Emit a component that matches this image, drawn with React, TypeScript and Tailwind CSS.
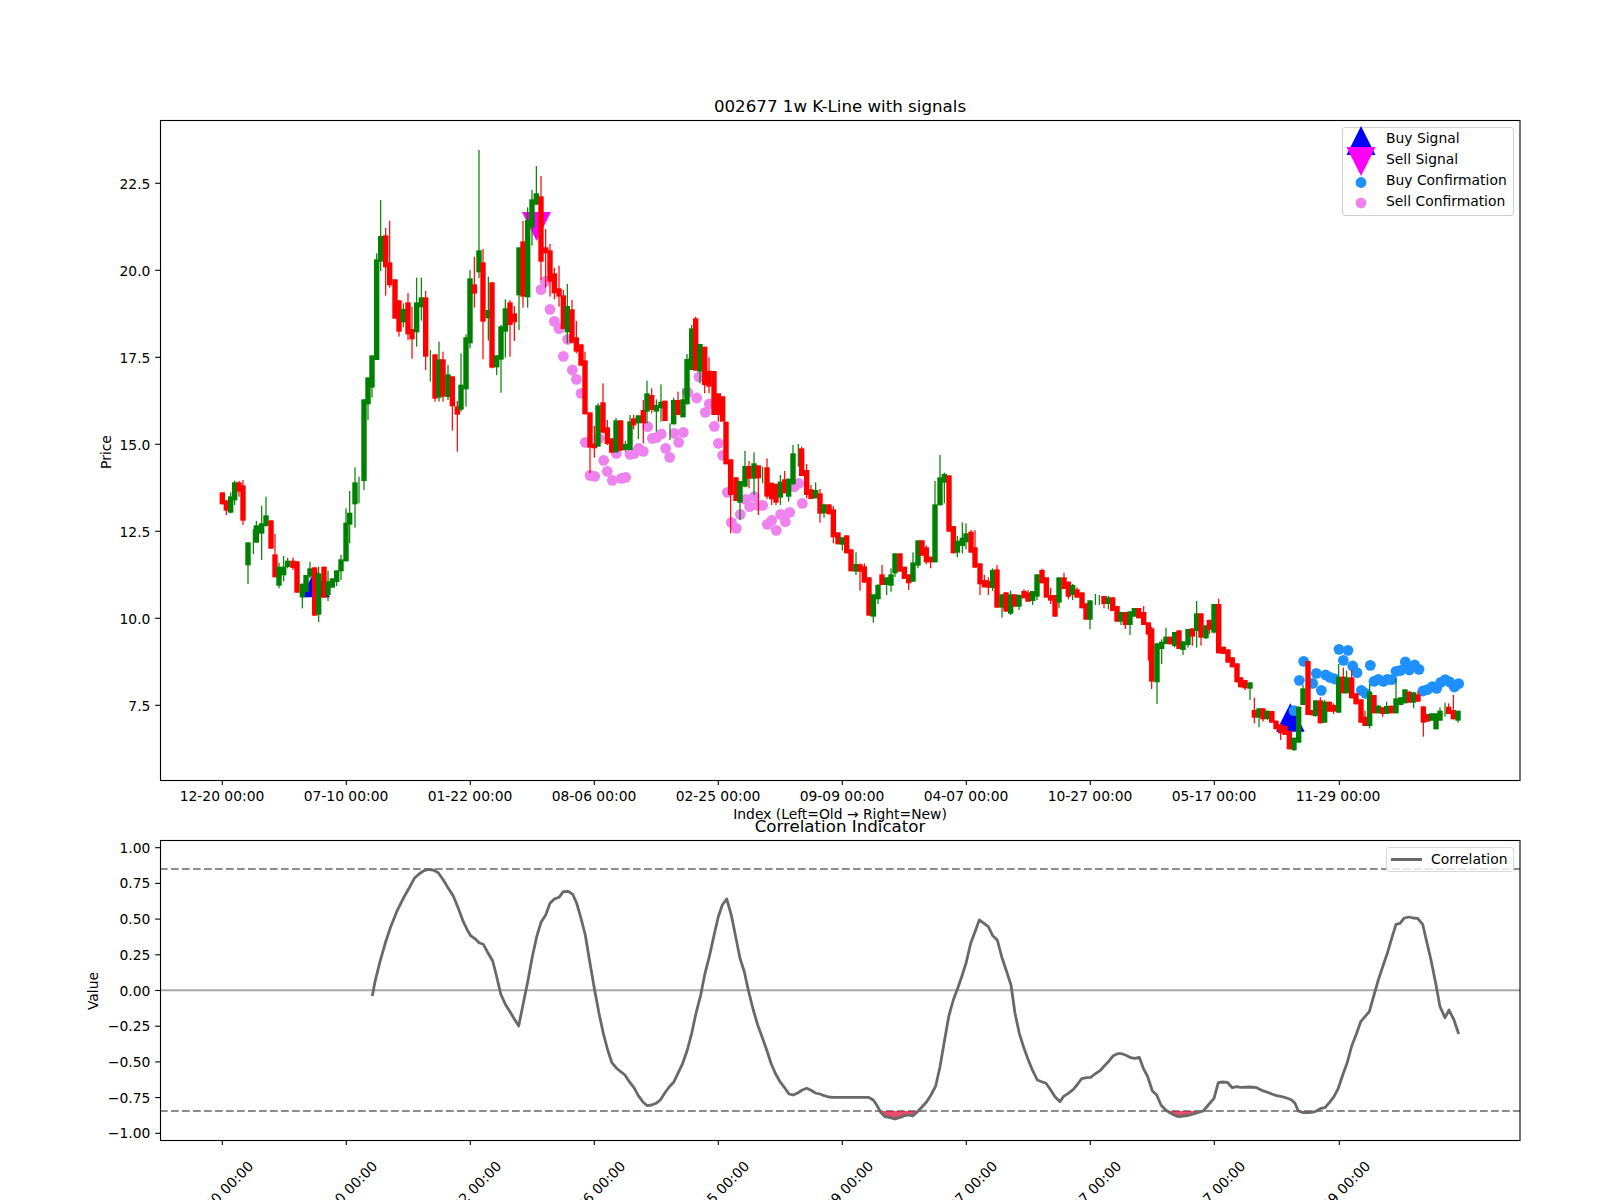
const G = "#008000";
const R = "#ff0000";
type C = number[];

// [x, red?, bodyTop, bodyBottom, wickTop?, wickBottom?] read per crop, converted below
const z4: C[] = [
  [247,1,157,193],[259,1,181,212,181,225],[272,0,169,218,157,220],[284,0,127,181,122,195],[297,1,127,155,123,170],[309,1,136,242,120,255],
  [324,0,307,376,307,432],[340,0,0,0,268,342],[349,0,256,308,243,308],[365,0,250,281,197,360],[378,0,226,258,170,260],[393,1,241,326],[405,1,343,412,282,412],
  [417,0,380,437,368,445],[431,0,380,406,348,424],[443,0,362,381,353,385],[459,1,362,384,353,390],[471,1,364,458],[487,0,431,472,431,505],[498,0,405,456],
  [510,0,385,410,365,415],[524,1,382,527],[536,0,400,524,380,546],[552,1,380,473],[564,0,424,465,392,483],[577,0,415,443],[590,0,391,426,391,438],
  [603,0,358,394,345,420],[618,0,248,364,205,364],[629,0,218,254,153,310],[645,0,127,193,82,263],[657,0,0,0,110,190],
];
const z1: C[] = [
  [672,0,928,1173,928,1200],[684,0,862,943,895,990],[696,0,796,893,813,923],[710,0,508,810,490,810],[722,0,438,515,330,543],[737,1,436,532,414,617],
  [749,1,517,586,392,593],[765,1,568,686],[777,1,631,725,631,740],[790,0,657,697,640,712],[804,1,637,733,609,750],[816,1,717,748,650,806],[830,0,637,727,563,770],
  [844,0,622,652,563,692],[857,1,622,800,603,840],[871,0,0,0,780,875],[885,1,793,926,793,935],[897,0,808,923,755,935],[909,1,808,920,785,935],[924,0,853,921,825,930],
  [937,1,859,949,859,1022],[952,1,949,974,933,1085],[963,0,884,959,790,965],[978,0,742,898,733,950],[990,0,565,760,540,775],[1003,1,583,611,500,653],[1017,0,481,547,180,565],
  [1029,1,517,695,477,808],[1045,0,660,685,560,752],[1056,1,577,833,577,835],[1070,0,796,832,796,855],[1083,0,709,809,705,908],[1096,0,655,725,628,803],[1110,1,637,705,630,800],
  [1123,1,670,697,648,753],[1137,0,472,616,472,720],[1149,1,454,620,393,653],[1163,0,390,622,352,653],[1176,0,328,412,300,467],[1189,0,310,344,228,344],[1203,1,319,515,258,570],
  [1217,1,472,490,417,593],[1230,1,481,575,462,620],[1243,1,550,610,533,628],[1257,1,595,620,527,650],[1270,1,616,717,600,718],[1282,0,648,727,582,760],[1296,1,658,758,630,760],
  [1309,1,742,785,693,790],[1323,1,763,827],[1335,1,811,973,785,973],[1350,1,967,1073,967,1150],[1363,1,1060,1075,1008,1103],[1374,0,946,1070,940,1070],[1389,1,937,1028,880,1030],
  [1402,1,1012,1062,990,1065],[1415,1,1045,1088],[1428,0,991,1087,984,1087],[1442,1,991,1082],[1456,0,1062,1080,1052,1085],[1470,0,994,1080,975,1080],[1481,1,985,1006,975,1018],[1495,0,976,1000,976,1047],
];
const z2: C[] = [
  [430,1,870,910,840,970],[441,0,820,875,782,910],[455,1,825,870,805,880],[469,0,855,875,838,935],[483,0,845,865,793,905],[495,1,842,903],[510,0,0,0,910,960],
  [521,0,840,913,833,913],[534,1,840,885,815,885],[549,0,838,892,805,892],[561,0,717,853,702,853],[575,0,625,750,615,750],[587,1,595,752,590,752],[600,0,672,755,672,790],
  [614,1,680,795,680,820],[627,1,752,800,712,820],[642,1,753,885],[655,1,820,885,820,905],[668,1,829,905],
];
const z3: C[] = [
  [678,1,65,193],[692,1,178,285,178,400],[708,1,232,303],[720,0,243,308,243,360],[735,0,198,260,153,262],[747,1,198,236,183,265],[762,0,190,236,157,285],[775,1,196,235,196,345],
  [788,0,0,0,200,250],[801,1,202,290,175,297],[815,1,248,298,248,315],[828,1,252,308,250,315],[841,0,245,293,225,315],[854,1,238,280,213,280],[866,0,236,290,236,305],[879,0,160,253,135,253],
  [895,0,0,0,132,200],[905,1,145,228,140,228],[920,1,210,285,192,295],[933,1,268,297,255,297],[947,0,270,295,247,295],[960,1,280,341,267,368],[972,0,313,340,313,353],[987,1,313,343],
  [1000,1,328,412,318,430],[1014,1,397,433],[1027,0,412,434,412,452],[1040,1,406,460],[1053,1,448,514],[1068,0,492,515,457,525],[1080,1,493,515,490,572],[1093,1,499,548,490,548],
  [1107,1,532,647],[1120,0,583,650,583,668],[1134,0,555,598,552,612],[1146,1,523,555,495,555],[1160,0,532,555,532,585],[1173,0,523,557,505,575],
];
const z5: C[] = [
  [45,0,340,400,340,411],[60,1,340,395],[73,1,380,417],[86,1,403,430,403,450],[99,0,367,425,337,425],[114,0,301,377,301,385],[126,1,301,347],[139,1,322,367,316,373],[152,1,350,367,350,385],
  [165,0,193,367,123,367],[180,0,112,196,45,196],[193,0,102,128,98,190],[207,1,106,275],[220,1,258,340],[232,0,302,338,288,352],[247,0,293,318,247,340],[258,0,280,307,250,328],[273,1,275,338,270,338],
  [285,1,322,383,270,383],[300,1,370,433,370,465],[313,1,420,442,405,442],[325,1,422,443,412,465],[338,0,390,444,385,453],[351,1,388,503,375,503],[366,0,463,503,463,533],[378,1,457,515],
  [392,0,463,521,452,525],[404,1,463,500],[417,0,465,500,463,510],[432,1,453,475,448,475],[444,1,457,485,450,485],[458,0,453,483,453,495],[471,0,403,470,403,480],[486,1,390,430,386,430],
  [499,1,412,473],[512,1,465,482,443,492],[525,1,465,530],[537,0,412,488,412,505],[552,1,412,447,398,447],[565,1,425,470,425,478],[578,0,435,465,432,480],[591,1,448,473,442,473],
  [606,1,457,505],[618,1,490,539],[630,0,481,539,481,568],[646,0,0,0,462,495],[658,0,0,0,465,495],[672,1,468,492,468,505],[685,0,472,492,468,508],[698,1,472,513],[711,1,498,545],
  [723,0,516,545,516,555],[736,1,516,555,516,567],[750,0,514,555,514,585],[763,0,504,530],[776,1,504,535],[791,1,516,555,498,555],[805,1,547,584,547,662],[815,1,565,725,560,747],
  [831,0,610,727,610,792],[845,0,605,627,598,672],[858,0,590,612,563,612],[870,1,590,613],[884,0,576,618,576,622],[897,1,571,627],[909,0,604,630,604,645],[924,0,567,615,567,623],
  [937,1,565,590,565,617],[950,0,520,573,483,623],[963,1,520,593,520,617],[978,0,556,595,556,597],[988,1,540,570,538,582],[1002,0,492,578,492,580],[1016,1,492,640,476,640],[1030,1,620,642],
  [1044,1,628,668],[1057,1,652,682],[1071,1,670,727],[1082,1,712,742],[1095,1,720,745,720,750],[1110,0,727,746,727,780],[1123,1,810,833,773,850],[1137,0,805,833,805,862],[1149,1,805,838,805,845],[1162,0,812,837,812,840],[1175,1,813,848],
];
const z6: C[] = [
  [215,1,365,395],[228,1,392,418],[242,1,403,430,403,450],[255,1,408,435],[268,1,422,478],[282,0,443,480,443,483],[296,0,350,458],[309,0,295,345,285,345],[324,1,213,375],[337,1,360,376],
  [347,0,331,378,331,380],[361,1,331,400,322,400],[374,0,335,398,330,398],[388,1,335,365],[401,1,345,365,340,372],[416,0,260,368,222,368],[430,1,260,310,233,310],[440,0,262,310,242,310],
  [455,1,262,325,240,325],[468,1,310,343],[483,1,328,398],[495,1,380,408,362,408],[509,0,305,408,282,415],[522,1,315,370],[535,0,347,370,345,370],[548,1,352,372,352,380],[560,0,348,372,335,372],
  [574,1,347,370],[588,0,325,370,265,370],[602,0,322,345],[615,0,298,340],[628,1,305,338,303,338],[641,0,307,338,307,355],[654,1,313,335,303,335],[670,1,349,398,349,440],[682,1,372,395],
  [695,0,370,392],[708,0,370,418],[720,0,362,392,352,392],[735,0,0,0,338,380],[746,1,350,372,340,372],[760,1,360,388,315,388],[774,0,362,392,362,398],
];

const convert = (rows: C[], ox: number, oy: number) =>
  rows.map(([x, red, bt, bb, wt, wb]) => ({
    x: ox + x / 3,
    red: !!red,
    bt: oy + bt / 3,
    bb: oy + bb / 3,
    wt: oy + (wt ?? bt) / 3,
    wb: oy + (wb ?? bb) / 3,
  }));

const candles = [
  ...convert(z4, 140, 440),
  ...convert(z1, 140, 90),
  ...convert(z2, 500, 120),
  ...convert(z3, 500, 400),
  ...convert(z5, 880, 440),
  ...convert(z6, 1200, 590),
];

const pts = (rows: number[][], ox: number, oy: number) => rows.map(([x, y]) => [ox + x / 3, oy + y / 3]);

const blueDots = pts(
  [[282,362],[298,271],[311,214],[338,280],[349,250],[364,301],[377,255],[390,262],[404,267],[417,178],[430,211],[444,181],[458,228],[471,248],[484,301],[497,310],[511,226],[522,274],[535,268],[550,274],[562,268],[575,269],[588,244],[602,241],[616,216],[628,240],[644,225],[657,238],[669,303],[682,299],[697,290],[710,295],[722,277],[736,269],[749,276],[763,291],[776,281]],
  1200, 590,
);
const pinkDots = [
  ...pts([[123,509],[136,484],[150,568],[163,604],[177,626],[203,658],[190,709],[217,750],[229,778],[243,820],[563,817],[590,834],[577,725],[597,771],[628,852],[616,877]], 500, 120),
  ...pts([[256,127],[270,226],[284,229],[297,115],[311,181],[322,214],[337,241],[349,160],[364,235],[377,232],[390,163],[403,160],[416,145],[430,154],[443,80],[457,115],[470,112],[484,102],[497,145],[509,172],[523,100],[536,127],[550,97],[643,79],[655,130],[668,166],[682,277],[694,367],[709,385],[721,343],[737,298],[749,320],[763,290],[775,316],[788,316],[802,373],[815,361],[829,391],[842,343],[856,365],[869,337],[883,260],[896,250],[907,310]], 500, 400),
];

const corr = [
  ...pts([[877,588],[885,545],[900,485],[917,425],[932,380],[950,335],[970,295],[987,265],[1003,235],[1017,222],[1032,212],[1045,208],[1060,210],[1075,218],[1090,240],[1105,265],[1120,288],[1135,325],[1150,365],[1162,390],[1172,407],[1187,418],[1197,428],[1210,433],[1222,455],[1238,483],[1250,530],[1262,582],[1277,615],[1290,635],[1303,657],[1316,678],[1330,610],[1343,545],[1357,470],[1370,410],[1383,367],[1397,345],[1410,310],[1423,297],[1437,292]], 80, 800),
  ...pts([[10,275],[25,274],[38,283],[50,310],[63,355],[76,405],[90,490],[103,565],[117,640],[130,700],[143,750],[155,787],[168,803],[182,815],[195,825],[208,845],[222,863],[235,887],[248,905],[262,917],[275,915],[288,910],[301,900],[315,878],[328,860],[342,845],[355,818],[368,790],[382,750],[395,700],[408,640],[422,585],[435,520],[448,470],[461,410],[475,350],[487,315],[500,297],[514,345],[527,410],[540,475],[553,515],[566,575],[580,630],[593,675],[606,710],[620,750],[633,790],[646,820],[660,845],[673,862],[687,882],[700,885],[713,879],[727,870],[740,865],[753,871],[766,879],[780,882],[793,887],[806,891],[820,892],[925,892],[940,900],[950,915],[962,937],[975,950],[990,953],[1005,957],[1020,952],[1032,948],[1045,945],[1058,948],[1072,935],[1085,922],[1100,905],[1113,885],[1127,858],[1140,800],[1153,725],[1166,650],[1180,600],[1193,565],[1205,530],[1218,490],[1232,430],[1245,395],[1258,360],[1272,370],[1285,380],[1298,407],[1312,420],[1325,470],[1340,515],[1353,555],[1365,640],[1378,700],[1392,745],[1405,780],[1418,812],[1432,840],[1445,845],[1458,850],[1472,870],[1485,890]], 560, 800),
  ...pts([[30,905],[40,890],[55,880],[70,868],[83,852],[95,836],[110,833],[122,832],[135,822],[150,812],[163,798],[177,783],[190,767],[203,761],[215,761],[228,766],[242,773],[255,775],[268,772],[280,805],[293,830],[307,872],[320,885],[333,915],[347,930],[360,938],[372,945],[385,950],[400,948],[415,946],[430,942],[445,937],[460,933],[475,915],[492,895],[505,848],[518,846],[532,847],[547,863],[560,860],[572,862],[600,861],[620,863],[635,871],[650,876],[665,882],[680,887],[695,890],[710,894],[725,900],[735,910],[745,933],[760,938],[775,938],[790,936],[800,933],[812,925],[825,923],[838,908],[852,890],[865,865],[878,825],[891,790],[905,738],[918,705],[932,665],[945,650],[958,635],[972,585],[985,540],[998,500],[1012,460],[1025,415],[1038,373],[1050,370],[1063,354],[1077,351],[1090,354],[1103,355],[1118,373],[1130,425],[1143,480],[1157,550],[1170,620],[1185,653],[1197,630],[1212,660],[1226,702]], 1050, 800),
];
const corrPath = corr.map((p) => `${p[0].toFixed(1)},${p[1].toFixed(1)}`).join(" ");
const LOW = 1111;
const redFills = corr.reduce<number[][][]>((acc, p, i) => {
  if (p[1] > LOW) {
    const prev = corr[i - 1];
    if (prev[1] <= LOW) acc.push([[prev[0], LOW]]);
    acc[acc.length - 1].push(p);
    const next = corr[i + 1];
    if (next[1] <= LOW) acc[acc.length - 1].push([next[0], LOW]);
  }
  return acc;
}, []);

const tickXs = [222.3, 346.3, 470.3, 594.3, 718.3, 842.3, 966.3, 1090.3, 1214.3, 1339.3];
const labelXs = [222, 346, 470, 594, 718, 842, 966, 1090, 1214, 1338];
const tickLabels = ["12-20 00:00","07-10 00:00","01-22 00:00","08-06 00:00","02-25 00:00","09-09 00:00","04-07 00:00","10-27 00:00","05-17 00:00","11-29 00:00"];
const priceTicks: [string, number][] = [["22.5",183.3],["20.0",270.3],["17.5",357.3],["15.0",444.3],["12.5",531.3],["10.0",618.3],["7.5",705.3]];
const valueTicks: [string, number][] = [["1.00",847.7],["0.75",883.4],["0.50",919.1],["0.25",954.8],["0.00",990.5],["−0.25",1026.2],["−0.50",1061.9],["−0.75",1097.6],["−1.00",1133.3]];

function Legend1() {
  return (
    <div className="absolute left-[1342px] top-[127px] h-[89px] w-[172px] rounded-[3px] border border-[#d0d0d0] bg-white/80 pl-[43px] text-[13.89px] leading-[21px] text-black">
      <svg className="absolute left-[-1px] top-[-1px] overflow-visible" width="1" height="1" viewBox="0 0 1 1">
        <polygon points="19,-1 4.5,28 33.5,28" fill="#0000ff" />
        <polygon points="4.5,20 33.5,20 19,49" fill="#ff00ff" />
        <circle cx="19" cy="55.5" r="5.4" fill="#1e90ff" />
        <circle cx="19" cy="76" r="5.4" fill="#ee82ee" />
      </svg>
      <div>Buy Signal</div>
      <div>Sell Signal</div>
      <div>Buy Confirmation</div>
      <div>Sell Confirmation</div>
    </div>
  );
}

function Legend2() {
  return (
    <div className="absolute left-[1386px] top-[32px] flex h-[25px] w-[128px] items-center gap-[9px] rounded-[3px] border border-[#d8d8d8] bg-white/80 pl-[4px] text-[13.89px] text-black">
      <span className="h-[2.8px] w-[31px] bg-[#696969]" />
      <span>Correlation</span>
    </div>
  );
}

export default function App() {
  return (
    <div className="flex h-[1200px] w-[1600px] flex-col overflow-hidden bg-white font-['DejaVu_Sans',sans-serif]">
      <div className="relative h-[815px] w-full">
        <svg className="block overflow-visible" width="1600" height="815" viewBox="0 0 1600 815" fontSize="13.89">
          <text x="840" y="111.7" textAnchor="middle" fontSize="16.67">002677 1w K-Line with signals</text>
          <polygon points="522,212 551,212 536.5,241" fill="#ff00ff" />
          <polygon points="301,597.3 330,597.3 315.7,569.3" fill="#0000ff" />
          <polygon points="1276,731.7 1304.7,731.7 1290.3,703.3" fill="#0000ff" />
          {pinkDots.map((p, i) => <circle key={i} cx={p[0]} cy={p[1]} r="5.4" fill="#ee82ee" />)}
          {blueDots.map((p, i) => <circle key={i} cx={p[0]} cy={p[1]} r="5.4" fill="#1e90ff" />)}
          {candles.map((c, i) => (
            <g key={i} fill={c.red ? R : G}>
              <rect x={c.x - 0.6} y={c.wt} width="1.2" height={c.wb - c.wt} />
              {c.bb > c.bt && <rect x={c.x - 2.7} y={c.bt} width="5.4" height={c.bb - c.bt} />}
            </g>
          ))}
          <rect x="160.5" y="120.5" width="1359.5" height="660" fill="none" stroke="#000" strokeWidth="1.1" />
          {priceTicks.map(([l, y]) => (
            <g key={l}>
              <line x1="155.2" x2="160" y1={y} y2={y} stroke="#000" strokeWidth="1.1" />
              <text x="150.4" y={y + 5.3} textAnchor="end">{l}</text>
            </g>
          ))}
          {tickXs.map((x, i) => (
            <g key={x}>
              <line x1={x} x2={x} y1="780" y2="785" stroke="#000" strokeWidth="1.1" />
              <text x={labelXs[i]} y="801" textAnchor="middle">{tickLabels[i]}</text>
            </g>
          ))}
          <text x="840" y="819" textAnchor="middle">Index (Left=Old → Right=New)</text>
          <text transform="rotate(-90 111 452)" x="111" y="452" textAnchor="middle">Price</text>
        </svg>
        <Legend1 />
      </div>
      <div className="relative h-[385px] w-full">
        <svg className="block overflow-visible" width="1600" height="385" viewBox="0 815 1600 385" fontSize="13.89">
          <text x="840" y="831.7" textAnchor="middle" fontSize="16.67">Correlation Indicator</text>
          <line x1="160" x2="1520" y1="990.3" y2="990.3" stroke="#a9a9a9" strokeWidth="2.1" />
          <line x1="160" x2="1520" y1="869" y2="869" stroke="#8c8c8c" strokeWidth="2.1" strokeDasharray="7.7 3.3" />
          <line x1="160" x2="1520" y1="1111" y2="1111" stroke="#8c8c8c" strokeWidth="2.1" strokeDasharray="7.7 3.3" />
          {redFills.map((f, i) => (
            <polygon key={i} points={f.map((p) => p.join(",")).join(" ")} fill="#dc143c" fillOpacity="0.75" />
          ))}
          <polyline points={corrPath} fill="none" stroke="#696969" strokeWidth="2.8" strokeLinejoin="round" />
          <rect x="160.5" y="840.5" width="1359.5" height="300" fill="none" stroke="#000" strokeWidth="1.1" />
          {valueTicks.map(([l, y]) => (
            <g key={l}>
              <line x1="155.2" x2="160" y1={y} y2={y} stroke="#000" strokeWidth="1.1" />
              <text x="150.4" y={y + 5} textAnchor="end">{l}</text>
            </g>
          ))}
          {tickXs.map((x, i) => (
            <g key={x}>
              <line x1={x} x2={x} y1="1140" y2="1145" stroke="#000" strokeWidth="1.1" />
              <text transform={`rotate(-45 ${x - 1.5} 1193.5)`} x={x - 1.5} y="1198.5" textAnchor="middle">{tickLabels[i]}</text>
            </g>
          ))}
          <text transform="rotate(-90 98 991)" x="98" y="991" textAnchor="middle">Value</text>
        </svg>
        <Legend2 />
      </div>
    </div>
  );
}
